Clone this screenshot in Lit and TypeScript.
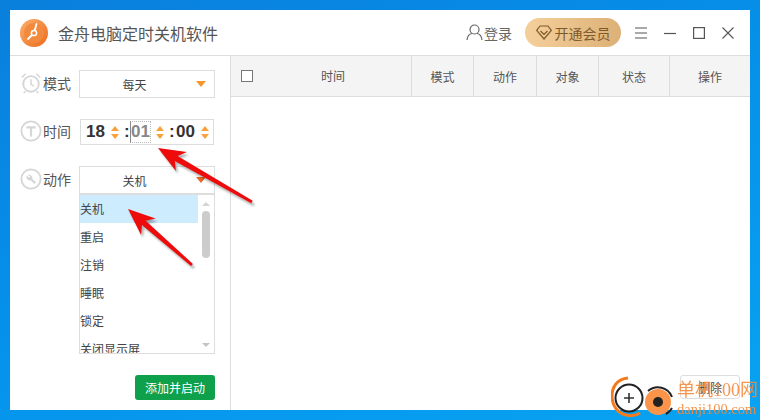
import { LitElement, html, css, svg } from "lit";
import { customElement } from "lit/decorators.js";

const arrow = (x1: number, y1: number, x2: number, y2: number) => {
  const a = Math.atan2(y2 - y1, x2 - x1);
  const p = (d: number, s: number) => `${x2 - Math.cos(a) * d - Math.sin(a) * s},${y2 - Math.sin(a) * d + Math.cos(a) * s}`;
  const L = Math.hypot(x2 - x1, y2 - y1);
  const shape = [p(0, 0), p(27, 11), p(21, 2.8), p(L, 1.4), p(L, -1.4), p(21, -2.8), p(27, -11)].join(" ");
  return svg`<polygon class="shadow" points=${shape} transform="translate(2 3)"/><polygon points=${shape} fill="#ee0b0b"/>`;
};

@customElement("app-root")
export class AppRoot extends LitElement {
  static styles = css`
    :host { display: block; width: 760px; height: 420px; overflow: hidden; position: relative;
      font-family: "Liberation Sans", "Noto Sans CJK SC", sans-serif; color: #555; }
    .desk { box-sizing: border-box; width: 760px; height: 420px; padding: 10px;
      background: linear-gradient(160deg, #0a7fdc 0%, #0590ea 45%, #08a3f2 100%); }
    .win { width: 740px; height: 400px; background: #fff; display: flex; flex-direction: column; }
    .title { height: 46px; flex: none; box-sizing: border-box; border-bottom: 1px solid #ddd; display: flex; align-items: center; padding: 0 16px 0 10px; }
    .name { font-size: 16px; color: #555; margin-left: 10px; flex: 1; }
    .login { display: flex; align-items: center; gap: 1px; font-size: 14px; color: #666; margin-right: 13px; }
    .vip { width: 96px; height: 29px; border-radius: 15px; background: linear-gradient(90deg, #f5cf9b, #dcb177); display: flex; align-items: center; justify-content: center; gap: 3px; font-size: 14px; color: #7d5a2b; margin-right: 14px; }
    .wc { display: flex; align-items: center; gap: 17px; }
    .body { flex: 1; display: flex; min-height: 0; }
    .side { width: 221px; flex: none; box-sizing: border-box; border-right: 1px solid #ddd; padding: 14px 15px 0 10px; display: flex; flex-direction: column; position: relative; }
    .row { display: flex; align-items: center; font-size: 14px; color: #555; }
    .row > svg { flex: none; margin-right: 1px; margin-bottom: 2px; }
    .gap { margin-top: 21px; }
    .lab { width: 29px; flex: none; white-space: nowrap; padding-bottom: 2px; }
    .sel { flex: 1; height: 28px; box-sizing: border-box; border: 1px solid #ddd; padding-right: 25px; font-size: 12px; color: #444; display: flex; align-items: center; justify-content: center; position: relative; margin-left: 7px; }
    .tri { position: absolute; right: 8px; top: 10px; width: 0; height: 0; border: 5px solid transparent; border-top: 6px solid #f8942c; border-bottom: 0; }
    .tri.dark { border-top-color: #e8692a; }
    .time { flex: 1; height: 26px; box-sizing: border-box; border: 1px solid #ddd; margin-left: 8px; margin-right: 1px; display: flex; align-items: center; padding-left: 5px; font: bold 17px "Liberation Sans", sans-serif; color: #333; }
    .num { width: 21px; flex: none; }
    .num.last { margin-left: 1px; }
    .sp { display: flex; flex-direction: column; gap: 3px; margin: 0 4px; flex: none; }
    .sp i { display: block; width: 0; height: 0; border: 4px solid transparent; }
    .sp .u { border-bottom: 5px solid #f9a23c; border-top: 0; }
    .sp .d { border-top: 5px solid #f9a23c; border-bottom: 0; }
    .colon { width: 6px; flex: none; padding-left: 1px; }
    .focus { width: 19px; height: 20px; line-height: 20px; border: 1px dotted #bbb; border-left: 1px solid #888; color: #888; margin-right: 1px; }
    .list { height: 160px; margin-left: 59px; box-sizing: border-box; border: 1px solid #ddd; display: flex; overflow: hidden; }
    .items { flex: 1; min-width: 0; font-size: 12px; color: #444; }
    .it { height: 28px; line-height: 30px; white-space: nowrap; }
    .it.on { background: #cdecfd; }
    .bar { width: 16px; flex: none; display: flex; flex-direction: column; align-items: center; position: relative; }
    .thumb { width: 8px; height: 47px; border-radius: 4px; background: #ccc; margin-top: 5px; }
    .ua { width: 0; height: 0; border: 4px solid transparent; border-bottom: 4px solid #d4d4d4; border-top: 0; margin-top: 7px; }
    .da { position: absolute; bottom: 6px; width: 0; height: 0; border: 4px solid transparent; border-top: 4px solid #c4c4c4; border-bottom: 0; }
    .add { align-self: flex-end; width: 80px; height: 25px; box-sizing: border-box; padding-bottom: 1px; border-radius: 3px; background: #0ea04a; color: #fff; font-size: 12px; display: flex; align-items: center; justify-content: center; margin-top: 21px; }
    .main { flex: 1; display: flex; flex-direction: column; position: relative; min-width: 0; }
    .thead { height: 41px; box-sizing: border-box; background: #f4f4f4; border-bottom: 1px solid #ddd; display: flex; font-size: 12px; color: #555; }
    .th { box-sizing: border-box; border-right: 1px solid #ddd; display: flex; align-items: center; justify-content: center; position: relative; }
    .th.first { padding-left: 24px; padding-bottom: 2px; }
    .th:last-child { border-right: 0; flex: 1; }
    .cb { position: absolute; left: 10px; top: 14px; width: 12px; height: 12px; border: 1px solid #777; box-sizing: border-box; background: #fff; }
    .del { position: absolute; right: 10px; bottom: 11px; width: 60px; height: 24px; box-sizing: border-box; border: 1px solid #ddd; border-radius: 3px; font-size: 12px; color: #444; display: flex; align-items: center; justify-content: center; }
    .arrows { position: absolute; left: 0; top: 0; pointer-events: none; }
    .shadow { fill: #000; opacity: .3; filter: blur(1px); }
    .mark { position: absolute; left: 611px; top: 375px; width: 149px; height: 45px; pointer-events: none; }
    .mt { position: absolute; left: 66px; color: #f48a3c; font-family: "Liberation Serif", "Noto Sans CJK SC", serif; white-space: nowrap; opacity: .9; }
    .mt1 { font-size: 18px; line-height: 22px; top: 4px; }
    .mt2 { font-size: 14.5px; line-height: 16px; top: 26px; }
  `;

  private ic(kind: string) {
    const c = "#d6d6d6";
    return html`<svg width="22" height="22" viewBox="0 0 24 24" fill="none" stroke=${c} stroke-width="2">
      ${kind === "alarm" ? svg`<circle cx="12" cy="13" r="8.5"/><path d="M12 8v5.5l3.5 2M2 6l4-4M22 6l-4-4M6 21l-2 2M18 21l2 2" stroke-width="1.6"/>` : ""}
      ${kind === "t" ? svg`<circle cx="12" cy="12" r="10.5"/><path d="M7 8h10M12 8v10" stroke-width="2.4"/>` : ""}
      ${kind === "w" ? svg`<circle cx="12" cy="12" r="10.5"/><path d="M8 7.5a4 4 0 0 1 5.5 4.5l4 3.5-2 2-3.5-4a4 4 0 0 1-4.8-5.2l2.5 2 1.6-1.2z" fill=${c} stroke="none"/>` : ""}
    </svg>`;
  }

  private spin() {
    return html`<span class="sp"><i class="u"></i><i class="d"></i></span>`;
  }

  render() {
    const cols: [string, number][] = [["时间", 181], ["模式", 62], ["动作", 63], ["对象", 62], ["状态", 71], ["操作", 0]];
    return html`
      <div class="desk">
        <div class="win">
          <div class="title">
            <svg width="28" height="28" viewBox="0 0 28 28">
              <defs><linearGradient id="lg" x1="0" y1="0" x2="1" y2="1"><stop offset="0" stop-color="#fbb06c"/><stop offset="1" stop-color="#ec6a1c"/></linearGradient></defs>
              <circle cx="14" cy="14" r="14" fill="url(#lg)"/>
              <circle cx="14" cy="14" r="10" fill="#f28a3e"/>
              <path d="M14 14l2.5-9M14 14l-6 6" stroke="#fff" stroke-width="1.8" stroke-linecap="round"/>
              <circle cx="14" cy="14" r="2.6" fill="#f28a3e" stroke="#fff" stroke-width="1.5"/>
            </svg>
            <span class="name">金舟电脑定时关机软件</span>
            <span class="login">
              <svg width="17" height="17" viewBox="0 0 17 17" fill="none" stroke="#666" stroke-width="1.2"><circle cx="8.5" cy="5.5" r="4.5"/><path d="M1 16c.5-4 3-6.2 5-6.5M16 16c-.5-4-3-6.2-5-6.5"/></svg>
              登录
            </span>
            <span class="vip">
              <svg width="16" height="15" viewBox="0 0 16 15" fill="none" stroke="#7d5a2b" stroke-width="1.2"><path d="M4 1h8l3.3 4.3L8 14 .7 5.3zM4.5 6L8 9.5 11.5 6"/></svg>
              开通会员
            </span>
            <span class="wc">
              <svg width="12" height="12" viewBox="0 0 12 12" stroke="#555" stroke-width="1.2"><path d="M0 1h12M0 6h12M0 11h12"/></svg>
              <svg width="12" height="12" viewBox="0 0 12 12" stroke="#555" stroke-width="1.2"><path d="M0 6.5h12"/></svg>
              <svg width="12" height="12" viewBox="0 0 12 12" fill="none" stroke="#555" stroke-width="1.2"><rect x=".6" y=".6" width="10.8" height="10.8"/></svg>
              <svg width="12" height="12" viewBox="0 0 12 12" stroke="#555" stroke-width="1.1"><path d="M.5.5l11 11M11.5.5l-11 11"/></svg>
            </span>
          </div>
          <div class="body">
            <div class="side">
              <div class="row">${this.ic("alarm")}<span class="lab">模式</span><div class="sel">每天<span class="tri"></span></div></div>
              <div class="row gap">${this.ic("t")}<span class="lab">时间</span>
                <div class="time">
                  <span class="num">18</span>${this.spin()}<span class="colon">:</span><span class="num focus">01</span>${this.spin()}<span class="colon">:</span><span class="num last">00</span>${this.spin()}
                </div>
              </div>
              <div class="row gap">${this.ic("w")}<span class="lab">动作</span><div class="sel">关机<span class="tri dark"></span></div></div>
              <div class="list">
                <div class="items">
                  <div class="it on">关机</div><div class="it">重启</div><div class="it">注销</div><div class="it">睡眠</div><div class="it">锁定</div><div class="it">关闭显示屏</div>
                </div>
                <div class="bar"><span class="ua"></span><span class="thumb"></span><span class="da"></span></div>
              </div>
              <div class="add">添加并启动</div>
            </div>
            <div class="main">
              <div class="thead">
                ${cols.map(([t, w]) => html`<div class="th ${t === "时间" ? "first" : ""}" style=${w ? `width:${w}px` : ""}>${t === "时间" ? html`<span class="cb"></span>` : ""}${t}</div>`)}
              </div>
              <div class="del">删除</div>
            </div>
          </div>
        </div>
      </div>
      <svg class="arrows" width="760" height="420">
        ${arrow(252, 202, 158, 148)}
        ${arrow(192, 265, 128, 209)}
      </svg>
      <div class="mark">
        <svg width="66" height="45" viewBox="0 0 66 45" fill="none">
          <path d="M17 3C6 4 1 12 1 21s5 17 14 19c6 1.500 11 0 14-2" stroke="#f47a1c" stroke-width="3"/>
          <circle cx="18" cy="23" r="13.500" stroke="#222" stroke-width="2" fill="#fff"/>
          <path d="M13 23h10M18 18v10" stroke="#333" stroke-width="1.600"/>
          <circle cx="47" cy="27" r="13" fill="#f9944a"/>
          <path d="M37 16a15 15 0 0 1 24 6M61 33a15 15 0 0 1-6 6" stroke="#222" stroke-width="2"/>
          <circle cx="47" cy="27" r="5" fill="#222"/>
        </svg>
        <span class="mt mt1">单机100网</span>
        <span class="mt mt2">danji100.com</span>
      </div>
    `;
  }
}
